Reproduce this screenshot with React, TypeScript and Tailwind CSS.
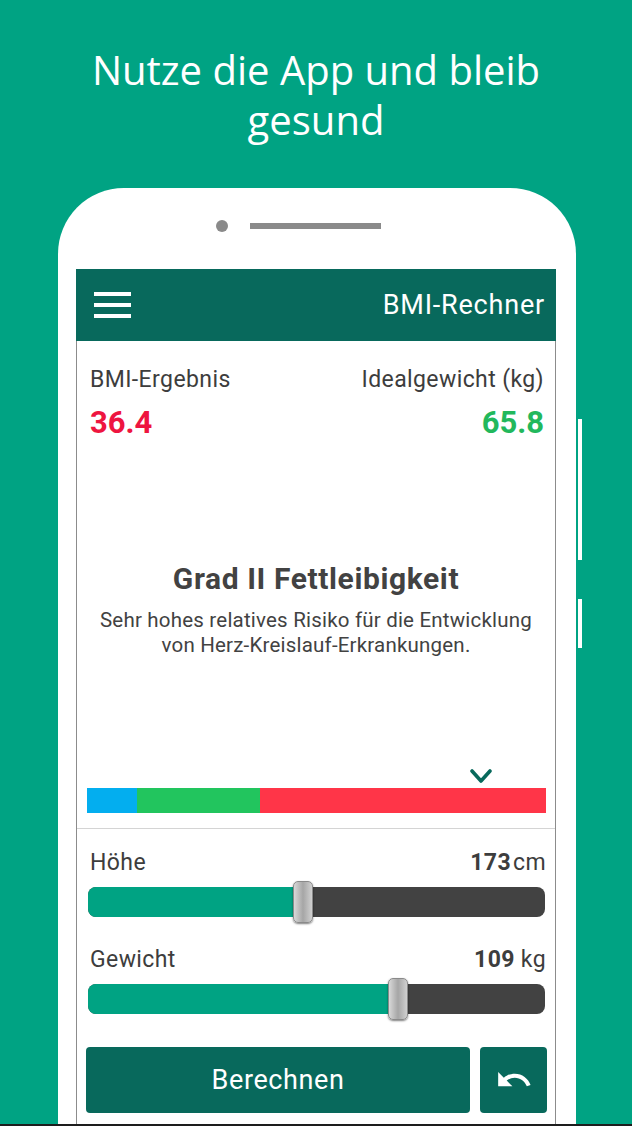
import { useState } from 'react';

const GREEN = 'bg-[#00a383]';

function Slider({ value, unit, label, pos }: { value: number; unit: string; label: string; pos: number }) {
  return (
    <div>
      <div className="flex items-center justify-between h-[28px] pl-[13px] pr-[9px] text-[23px] leading-[28px] tracking-[0.4px] text-[#3d3d3d]">
        <span>{label}</span>
        <span>
          <span className="font-bold">{value}</span>
          <span className={unit === 'cm' ? 'ml-[2px]' : 'ml-[6px]'}>{unit}</span>
        </span>
      </div>
      {/* track */}
      <div className="relative mt-[10px] ml-[11px] mr-[10px] h-[30px] rounded-[8px] bg-[#424242] flex">
        <div className="h-full rounded-l-[8px] bg-[#00a383]" style={{ width: pos }} />
        <div
          className="absolute top-[-6px] h-[42px] w-[20px] rounded-[5px] border border-[#8a8a8a] bg-gradient-to-r from-[#d8d8d8] via-[#a6a6a6] to-[#d0d0d0] shadow-[0_1px_2px_rgba(0,0,0,0.5)]"
          style={{ left: pos - 10 }}
        />
      </div>
    </div>
  );
}

export default function App() {
  const [bmi] = useState({ value: '36.4', ideal: '65.8' });

  return (
    <div
      className={`w-[632px] h-[1126px] ${GREEN} flex flex-col overflow-hidden border-b-2 border-[#1d1d1d]`}
      style={{ fontFamily: 'Roboto, "Noto Sans", sans-serif' }}
    >
      {/* Headline */}
      <h1
        className="pt-[45px] text-center text-white text-[40px] leading-[50px]"
        style={{ fontFamily: '"Open Sans", "Noto Sans", sans-serif' }}
      >
        Nutze die App und bleib
        <br />
        gesund
      </h1>

      {/* Phone */}
      <div className="relative mt-[43px] ml-[58px] w-[518px] flex-1 flex flex-col rounded-t-[66px] bg-white">
        {/* side buttons */}
        <div className="absolute right-[-6px] top-[231px] w-[4px] h-[141px] bg-white" />
        <div className="absolute right-[-6px] top-[411px] w-[4px] h-[49px] bg-white" />

        {/* camera + speaker */}
        <div className="h-[81px] flex items-start pt-[32px] pl-[158px]">
          <div className="w-[12px] h-[12px] rounded-full bg-[#8a8a8a]" />
          <div className="ml-[22px] mt-[3px] w-[131px] h-[6px] bg-[#8a8a8a]" />
        </div>

        {/* Screen */}
        <div className="ml-[18px] mr-[20px] flex-1 flex flex-col border-x border-[#8c8c8c] bg-white">
          {/* App bar */}
          <div className="-mx-px h-[72px] bg-[#08695c] flex items-center justify-between pl-[18px] pr-[11px]">
            <svg width="37" height="28" viewBox="0 0 37 28">
              <rect x="0" y="1" width="37" height="4" fill="white" />
              <rect x="0" y="12" width="37" height="4" fill="white" />
              <rect x="0" y="23" width="37" height="4" fill="white" />
            </svg>
            <span className="text-white text-[27px] tracking-[0.8px]">BMI-Rechner</span>
          </div>

          {/* Results */}
          <div className="pt-[25px] pl-[13px] pr-[11px]">
            <div className="flex justify-between text-[23px] leading-[28px] tracking-[0.4px] text-[#3d3d3d]">
              <span>BMI-Ergebnis</span>
              <span>Idealgewicht (kg)</span>
            </div>
            <div className="mt-[11px] flex justify-between text-[31px] leading-[36px] font-bold">
              <span className="text-[#ee1540]">{bmi.value}</span>
              <span className="text-[#22b85c]">{bmi.ideal}</span>
            </div>
          </div>

          {/* Category */}
          <div className="mt-[120px] text-center text-[#424242]">
            <div className="text-[30px] leading-[36px] font-bold tracking-[0.6px]">Grad II Fettleibigkeit</div>
            <p className="mt-[11px] text-[20.5px] leading-[25px] tracking-[0.2px]">
              Sehr hohes relatives Risiko für die Entwicklung
              <br />
              von Herz-Kreislauf-Erkrankungen.
            </p>
          </div>

          {/* Scale */}
          <div className="mt-[111px] ml-[393px] h-[16px]">
            <svg width="22" height="16" viewBox="0 0 22 16">
              <polyline points="2,2 11,12 20,2" fill="none" stroke="#08695c" strokeWidth="3.6" strokeLinecap="round" strokeLinejoin="round" />
            </svg>
          </div>
          <div className="mt-[3px] ml-[10px] mr-[9px] h-[25px] flex">
            <div className="w-[50px] bg-[#03aeef]" />
            <div className="w-[123px] bg-[#22c55e]" />
            <div className="flex-1 bg-[#ff3548]" />
          </div>
          <div className="mt-[15px] h-px bg-[#d4d4d4]" />

          {/* Sliders */}
          <div className="mt-[20px]">
            <Slider label="Höhe" value={173} unit="cm" pos={215} />
          </div>
          <div className="mt-[29px]">
            <Slider label="Gewicht" value={109} unit="kg" pos={310} />
          </div>

          {/* Buttons */}
          <div className="mt-[33px] ml-[9px] mr-[8px] flex gap-[10px]">
            <button className="flex-1 h-[66px] rounded-[4px] bg-[#08695c] text-white text-[27px] tracking-[0.6px]">Berechnen</button>
            <button className="w-[67px] h-[66px] rounded-[4px] bg-[#08695c] flex items-center justify-center">
              <svg width="38" height="38" viewBox="0 0 24 24">
                <path
                  fill="white"
                  d="M12.5 8c-2.65 0-5.05.99-6.9 2.6L2 7v9h9l-3.62-3.62c1.39-1.16 3.16-1.88 5.12-1.88 3.54 0 6.55 2.31 7.6 5.5l2.37-.78C21.08 11.03 17.15 8 12.5 8z"
                />
              </svg>
            </button>
          </div>
        </div>
      </div>
    </div>
  );
}
